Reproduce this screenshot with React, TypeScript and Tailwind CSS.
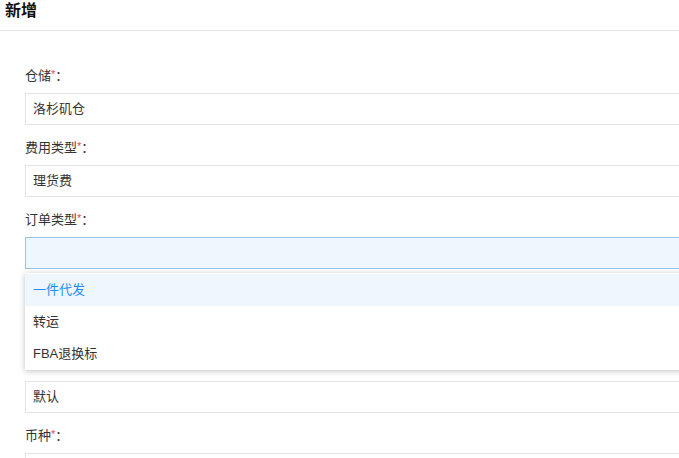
import React from "react";

const font = { fontFamily: '"Liberation Sans", "Noto Sans CJK SC", sans-serif' };

type Field = { label: string; value: string; active?: boolean; hidden?: boolean };

// the two fields after 订单类型 sit under the open dropdown, so their labels stay empty
const fields: Field[] = [
  { label: "仓储", value: "洛杉矶仓" },
  { label: "费用类型", value: "理货费" },
  { label: "订单类型", value: "", active: true },
  { label: "", value: "", hidden: true },
  { label: "", value: "默认", hidden: true },
  { label: "币种", value: "" },
];

const options = ["一件代发", "转运", "FBA退换标"];

function FormField({ field }: { field: Field }) {
  return (
    <div className="relative mb-[13px]">
      <div className="h-[20px] leading-[20px] text-[13px] text-[#333]">
        {!field.hidden && (
          <>
            {field.label}
            <span className="relative -top-[2px] text-[11px] text-[#e8414d]">*</span>
            <span>：</span>
          </>
        )}
      </div>
      <div
        className={
          "mt-[7px] h-[32px] w-[720px] border px-[7px] text-[13px] leading-[30px] text-[#333] " +
          (field.active ? "border-[#9cc4e6] bg-[#eef6fe]" : "border-[#e4e4e4] bg-white")
        }
      >
        {field.value}
      </div>
      {field.active && (
        <div className="absolute left-0 top-[63px] z-10 w-[720px] bg-white py-[0.5px] shadow-[0_1px_6px_rgba(0,0,0,0.25)]">
          {options.map((o, i) => (
            <div
              key={o}
              className={
                "h-[32px] px-[8px] text-[13px] leading-[32px] " +
                (i === 0 ? "bg-[#eef6fe] text-[#1e8cf0]" : "text-[#333]")
              }
            >
              {o}
            </div>
          ))}
        </div>
      )}
    </div>
  );
}

export default function App() {
  return (
    <div className="h-[458px] w-full overflow-hidden bg-white" style={font}>
      <div className="h-[31px] border-b border-[#e6e6ea] px-[5px] text-[16px] font-bold leading-[22px] text-[#111]">
        新增
      </div>
      <div className="pl-[25px] pt-[35px]">
        {fields.map((f, i) => (
          <FormField key={i} field={f} />
        ))}
      </div>
    </div>
  );
}
